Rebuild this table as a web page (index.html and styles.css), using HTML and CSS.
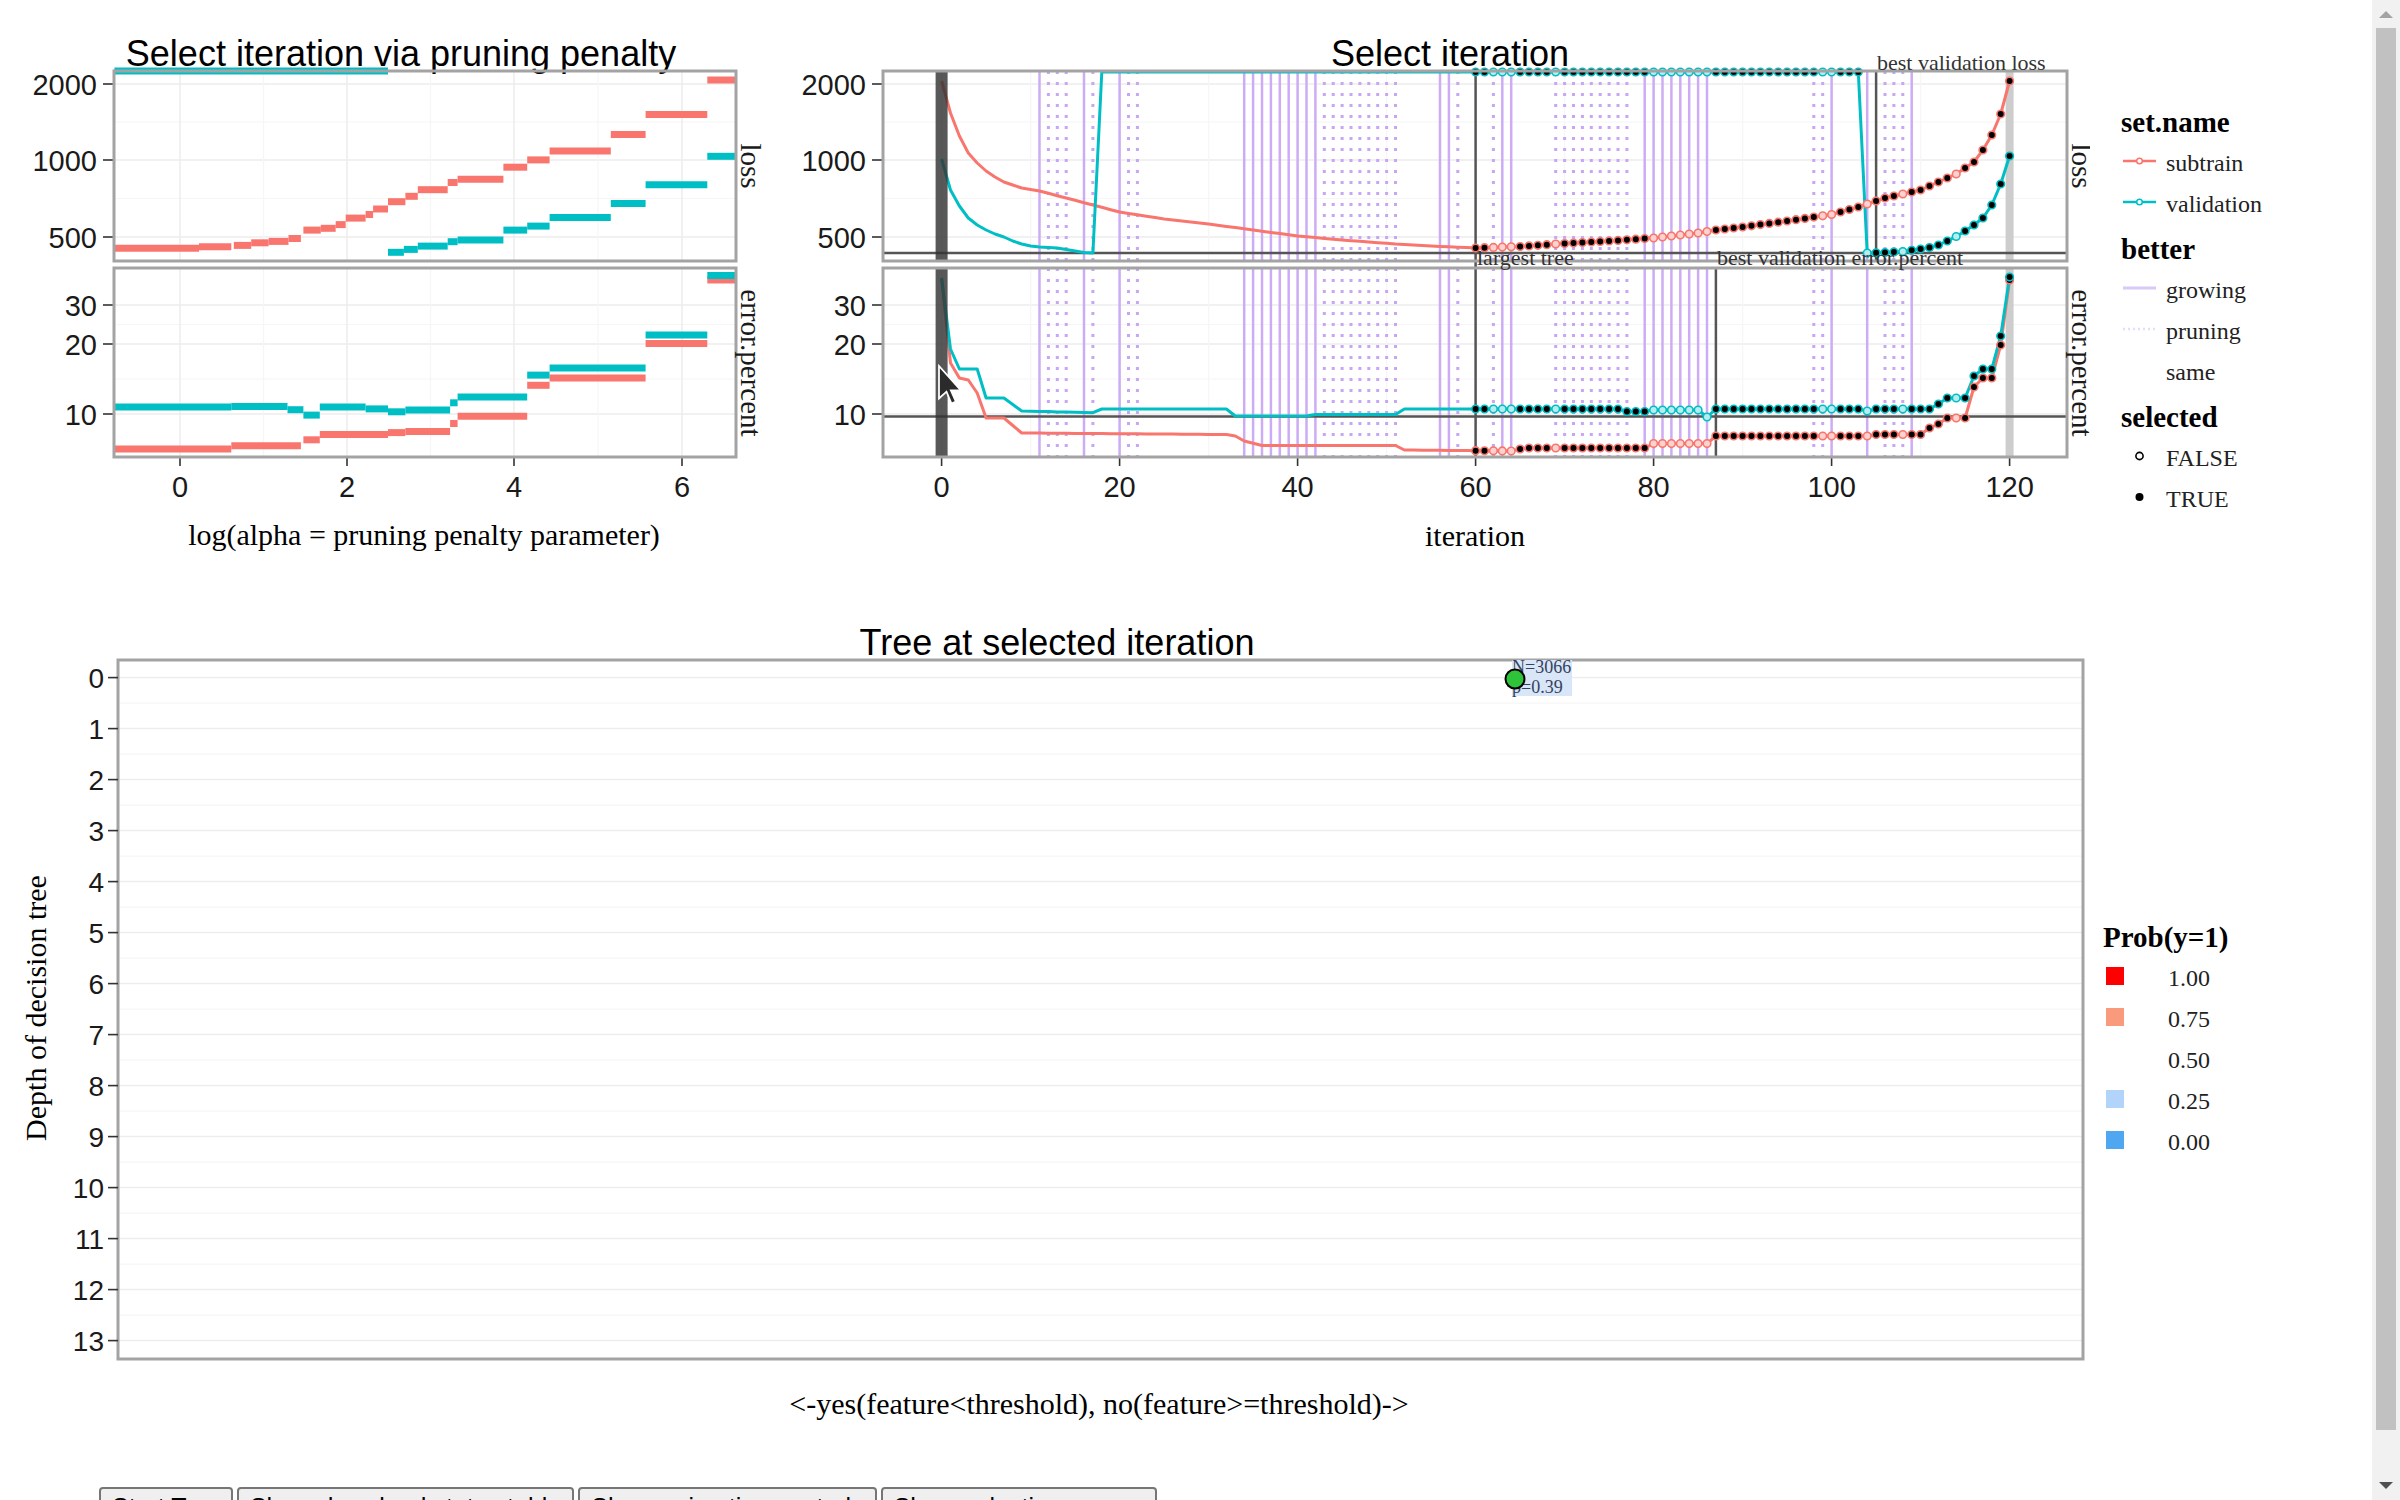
FILE: index.html
```html
<!DOCTYPE html>
<html>
<head>
<meta charset="utf-8">
<title>Select iteration</title>
<link rel="stylesheet" href="styles.css">
</head>
<body>
<div class="screen">
  <div class="page">
    <div class="top-row">
      <svg id="p1" class="plot p1" viewBox="0 0 780 580" xmlns="http://www.w3.org/2000/svg">
        <text class="ptitle" x="401" y="66">Select iteration via pruning penalty</text>
        <g id="p1-grid"></g>
        <g id="p1-data"></g>
        <g id="p1-axes"></g>
        <text class="axtitle" x="424" y="545">log(alpha = pruning penalty parameter)</text>
      </svg>
      <svg id="p2" class="plot p2" viewBox="780 0 1310 580" xmlns="http://www.w3.org/2000/svg">
        <text class="ptitle" x="1450" y="66">Select iteration</text>
        <g id="p2-grid"></g>
        <g id="p2-data"></g>
        <g id="p2-axes"></g>
        <text class="annot" x="1877" y="70">best validation loss</text>
        <text class="annot" x="1477" y="265">largest tree</text>
        <text class="annot" x="1717" y="265">best validation error.percent</text>
        <text class="axtitle" x="1475" y="546">iteration</text>
        <path class="cursor" transform="translate(939 366) scale(1.25)" d="M0 0 L0 26 L6 20.5 L10 30 L13.5 28.5 L9.5 19.5 L17.5 19.5 Z"/>
      </svg>
      <div class="legend">
        <div class="lg-title first">set.name</div>
        <div class="lg-item">
          <svg class="lg-icon" viewBox="0 0 43 41"><line class="li-red" x1="0" x2="33" y1="18" y2="18"/><circle class="lc-red" cx="16.5" cy="18" r="2.8"/></svg>
          <span>subtrain</span>
        </div>
        <div class="lg-item">
          <svg class="lg-icon" viewBox="0 0 43 41"><line class="li-teal" x1="0" x2="33" y1="18" y2="18"/><circle class="lc-teal" cx="16.5" cy="18" r="2.8"/></svg>
          <span>validation</span>
        </div>
        <div class="lg-title">better</div>
        <div class="lg-item">
          <svg class="lg-icon" viewBox="0 0 43 41"><line class="li-grow" x1="0" x2="33" y1="18" y2="18"/></svg>
          <span>growing</span>
        </div>
        <div class="lg-item">
          <svg class="lg-icon" viewBox="0 0 43 41"><line class="li-prune" x1="0" x2="33" y1="18" y2="18"/></svg>
          <span>pruning</span>
        </div>
        <div class="lg-item">
          <svg class="lg-icon" viewBox="0 0 43 41"></svg>
          <span>same</span>
        </div>
        <div class="lg-title">selected</div>
        <div class="lg-item">
          <svg class="lg-icon" viewBox="0 0 43 41"><circle class="lc-false" cx="16.5" cy="18" r="3.6"/></svg>
          <span>FALSE</span>
        </div>
        <div class="lg-item">
          <svg class="lg-icon" viewBox="0 0 43 41"><circle class="lc-true" cx="16.5" cy="18" r="4"/></svg>
          <span>TRUE</span>
        </div>
      </div>
    </div>

    <div class="tree-row">
      <svg id="tree" class="plot tree" viewBox="0 580 2090 900" xmlns="http://www.w3.org/2000/svg">
        <text class="ptitle" x="1057" y="655">Tree at selected iteration</text>
        <g id="tree-grid"></g>
        <rect class="panel" x="118" y="660" width="1965" height="699"/>
        <g id="tree-axes"></g>
        <text class="ylab" transform="translate(46 1008) rotate(-90)">Depth of decision tree</text>
        <rect class="node-bg" x="1512" y="660" width="60" height="36"/>
        <text class="node-text" x="1512" y="673">N=3066</text>
        <text class="node-text" x="1512" y="693">p=0.39</text>
        <circle class="node" cx="1515" cy="679" r="9.5"/>
        <text class="axtitle" x="1099" y="1414">&lt;-yes(feature&lt;threshold), no(feature&gt;=threshold)-&gt;</text>
      </svg>
      <div class="legend legend-prob">
        <div class="lg-title first">Prob(y=1)</div>
        <div class="lg-item"><span class="lg-swatch sw-100"></span><span class="lg-num">1.00</span></div>
        <div class="lg-item"><span class="lg-swatch sw-075"></span><span class="lg-num">0.75</span></div>
        <div class="lg-item"><span class="lg-swatch sw-050"></span><span class="lg-num">0.50</span></div>
        <div class="lg-item"><span class="lg-swatch sw-025"></span><span class="lg-num">0.25</span></div>
        <div class="lg-item"><span class="lg-swatch sw-000"></span><span class="lg-num">0.00</span></div>
      </div>
    </div>

    <div class="buttons">
      <button class="btn">Start Tour</button>
      <button class="btn">Show download status table</button>
      <button class="btn">Show animation controls</button>
      <button class="btn">Show selection menus</button>
    </div>
  </div>

  <div class="scrollbar">
    <div class="sb-arrow"><span class="tri-up"></span></div>
    <div class="sb-thumb"></div>
    <div class="sb-space"></div>
    <div class="sb-arrow bottom"><span class="tri-down"></span></div>
  </div>
</div>
<script src="script.js"></script>
</body>
</html>
```

FILE: styles.css
```css
html, body {
  margin: 0;
  padding: 0;
  background: #ffffff;
}
body {
  font-family: "Liberation Serif", "Times New Roman", serif;
  color: #000;
  overflow: hidden;
}
.screen {
  display: flex;
  width: 2400px;
  height: 1500px;
  overflow: hidden;
}
.page {
  flex: 1 1 auto;
  min-width: 0;
  display: flex;
  flex-direction: column;
  overflow: hidden;
}
.top-row {
  display: flex;
  height: 580px;
  flex: none;
}
.tree-row {
  display: flex;
  height: 900px;
  flex: none;
}
.plot {
  display: block;
  flex: none;
}
.p1 { width: 780px; height: 580px; }
.p2 { width: 1310px; height: 580px; }
.tree { width: 2090px; height: 900px; }

/* legends */
.legend {
  padding: 102px 0 0 31px;
  flex: 1 1 auto;
  min-width: 260px;
}
.lg-title {
  font-weight: bold;
  font-size: 29px;
  line-height: 41px;
  height: 41px;
  margin-top: 4px;
  color: #000;
  white-space: nowrap;
}
.lg-title.first { margin-top: 0; }
.lg-item {
  display: flex;
  align-items: center;
  height: 41px;
  font-size: 24px;
  line-height: 41px;
  color: #222;
  white-space: nowrap;
}
.lg-icon {
  width: 43px;
  height: 41px;
  margin-left: 2px;
  flex: none;
  display: block;
}
.li-red { stroke: #f8766d; stroke-width: 2.5; }
.li-teal { stroke: #00bfc4; stroke-width: 2.5; }
.lc-red { fill: #fff; stroke: #f8766d; stroke-width: 1.5; }
.lc-teal { fill: #fff; stroke: #00bfc4; stroke-width: 1.5; }
.li-grow { stroke: #dac8f7; stroke-width: 3; }
.li-prune { stroke: #e6dcfa; stroke-width: 2.5; stroke-dasharray: 2 3; }
.lc-false { fill: #fff; stroke: #000; stroke-width: 1.6; }
.lc-true { fill: #000; }

.legend-prob { padding: 337px 0 0 13px; }
.lg-swatch {
  width: 18px;
  height: 18px;
  margin: 0 44px 6px 3px;
  flex: none;
}
.sw-100 { background: #ff0000; }
.sw-075 { background: #f99a7c; }
.sw-050 { background: #ffffff; }
.sw-025 { background: #b3d4fa; }
.sw-000 { background: #4fa7f1; }
.lg-num { color: #222; }

/* buttons */
.buttons {
  display: flex;
  gap: 4px;
  padding-left: 99px;
  margin-top: 7px;
  flex: none;
}
.btn {
  font-family: "Liberation Sans", Arial, sans-serif;
  font-size: 25px;
  line-height: normal;
  padding: 4px 11px;
  border: 2px solid #767676;
  border-radius: 4px;
  background: #efefef;
  color: #000;
  flex: none;
}

/* scrollbar */
.scrollbar {
  width: 28px;
  flex: none;
  background: #f1f1f1;
  display: flex;
  flex-direction: column;
  align-items: center;
}
.sb-arrow {
  height: 28px;
  width: 28px;
  display: flex;
  align-items: center;
  justify-content: center;
  flex: none;
}
.sb-arrow.bottom { height: 30px; }
.tri-up {
  width: 0;
  height: 0;
  border-left: 7px solid transparent;
  border-right: 7px solid transparent;
  border-bottom: 7px solid #a3a3a3;
}
.tri-down {
  width: 0;
  height: 0;
  border-left: 7px solid transparent;
  border-right: 7px solid transparent;
  border-top: 7px solid #505050;
}
.sb-thumb {
  width: 20px;
  height: 1402px;
  background: #c1c1c1;
  flex: none;
}
.sb-space { flex: 1 1 auto; }

/* svg plot styling */
.ptitle {
  font-family: "Liberation Sans", Arial, sans-serif;
  font-size: 36px;
  text-anchor: middle;
  fill: #000;
}
.ytick, .xtick, .tick-tree {
  font-family: "Liberation Sans", Arial, sans-serif;
  font-size: 29px;
  fill: #1a1a1a;
}
.ytick { text-anchor: end; }
.xtick { text-anchor: middle; }
.tick-tree { text-anchor: end; font-size: 28px; }
.tickline { stroke: #333; stroke-width: 1.6; }
.axtitle {
  font-family: "Liberation Serif", "Times New Roman", serif;
  font-size: 30px;
  text-anchor: middle;
  fill: #000;
}
.ylab {
  font-family: "Liberation Serif", "Times New Roman", serif;
  font-size: 30px;
  text-anchor: middle;
  fill: #000;
}
.strip {
  font-family: "Liberation Serif", "Times New Roman", serif;
  font-size: 29px;
  text-anchor: middle;
  fill: #1a1a1a;
}
.annot {
  font-family: "Liberation Serif", "Times New Roman", serif;
  font-size: 22px;
  fill: #333;
}
.panel { fill: none; stroke: #a3a3a3; stroke-width: 3; }
.gmaj { stroke: #ededed; stroke-width: 1.5; }
.gmin { stroke: #f6f6f6; stroke-width: 1.2; }
.seg { stroke-width: 7; }
.red { stroke: #f8766d; }
.teal { stroke: #00bfc4; }
.curve { fill: none; stroke-width: 3; stroke-linejoin: round; }
.pt { stroke-width: 1.6; }
.pt.sel { fill: #000; }
.pt.unsel.red { fill: #fbd2cf; }
.pt.unsel.teal { fill: #b8ecee; }
.grow { stroke: #cdacf6; stroke-width: 2.5; }
.prune { stroke: #c7a6f4; stroke-width: 3; stroke-dasharray: 3 8; }
.band-dark { fill: #333; opacity: 0.82; }
.band-light { fill: #cdcdcd; }
.ref { stroke: #555; stroke-width: 2.5; }
.cursor { fill: #2b2b2b; stroke: #ffffff; stroke-width: 1.4; }
.node { fill: #2fc33a; stroke: #000; stroke-width: 2; }
.node-bg { fill: #d8e6f7; }
.node-text {
  font-family: "Liberation Serif", "Times New Roman", serif;
  font-size: 18px;
  fill: #34425e;
}
```

FILE: script.js
```js
(function () {
  var NS = 'http://www.w3.org/2000/svg';
  function add(parent, tag, attrs, text) {
    var e = document.createElementNS(NS, tag);
    for (var k in attrs) { e.setAttribute(k, attrs[k]); }
    if (text !== undefined) { e.textContent = text; }
    parent.appendChild(e);
    return e;
  }
  function byId(id) { return document.getElementById(id); }
  var PANELS = [[71, 261], [268, 457]];

  function buildGrid(g, x0, x1, vMajor, vMinor) {
    [122, 198.5, 324.5, 379].forEach(function (y) {
      add(g, 'line', { x1: x0, x2: x1, y1: y, y2: y, 'class': 'gmin' });
    });
    [84, 160, 237, 305, 344, 414].forEach(function (y) {
      add(g, 'line', { x1: x0, x2: x1, y1: y, y2: y, 'class': 'gmaj' });
    });
    PANELS.forEach(function (p) {
      vMinor.forEach(function (x) {
        add(g, 'line', { x1: x, x2: x, y1: p[0], y2: p[1], 'class': 'gmin' });
      });
      vMajor.forEach(function (x) {
        add(g, 'line', { x1: x, x2: x, y1: p[0], y2: p[1], 'class': 'gmaj' });
      });
    });
  }

  function buildAxes(g, x0, x1, xticks) {
    var yt = [[84, '2000'], [160, '1000'], [237, '500'], [305, '30'], [344, '20'], [414, '10']];
    yt.forEach(function (t) {
      add(g, 'line', { x1: x0 - 11, x2: x0, y1: t[0], y2: t[0], 'class': 'tickline' });
      add(g, 'text', { x: x0 - 17, y: t[0] + 10.5, 'class': 'ytick' }, t[1]);
    });
    xticks.forEach(function (t) {
      add(g, 'line', { x1: t[0], x2: t[0], y1: 457, y2: 466, 'class': 'tickline' });
      add(g, 'text', { x: t[0], y: 497, 'class': 'xtick' }, t[1]);
    });
    PANELS.forEach(function (p) {
      add(g, 'rect', { x: x0, y: p[0], width: x1 - x0, height: p[1] - p[0], 'class': 'panel' });
    });
    add(g, 'text', { 'class': 'strip', transform: 'translate(' + (x1 + 5) + ' 166) rotate(90)' }, 'loss');
    add(g, 'text', { 'class': 'strip', transform: 'translate(' + (x1 + 5) + ' 363) rotate(90)' }, 'error.percent');
  }

  /* ---------- plot 1 ---------- */
  var p1x = [180, 347, 514, 682];
  buildGrid(byId('p1-grid'), 114, 736, p1x, [263.5, 430.5, 598]);
  var p1 = byId('p1-data');
  function segs(list, cls) {
    list.forEach(function (s) {
      add(p1, 'line', { x1: s[0], x2: s[1], y1: s[2], y2: s[2], 'class': 'seg ' + cls });
    });
  }
  segs([[114.4,199,248.3],[199,231.3,246.8],[233.8,251.2,245.4],[251.2,268.6,242.8],[268.6,288.5,241.4],[288.5,300.9,238.5],[303.4,320.8,230.1],[320.8,335.7,228.3],[335.7,345.7,224.6],[345.7,365.6,218.1],[365.6,373.1,214.5],[373.1,388,209],[388,405.4,201.7],[405.4,417.8,196.3],[417.8,447.7,189.7],[447.7,457.6,182.5],[457.6,503.4,179.2],[503.4,527.2,167.2],[527.2,549.6,159.9],[549.6,610.8,150.9],[610.8,645.6,134.5],[645.6,707.3,114.5],[707.3,736,80]], 'red');
  segs([[114.4,388,71],[388,403.9,252.3],[403.9,417.8,249.4],[417.8,447.7,246.1],[447.7,457.6,241.7],[457.6,503.4,239.9],[503.4,527.2,230.1],[527.2,549.6,226.1],[549.6,610.8,217.4],[610.8,645.6,203.6],[645.6,707.3,184.7],[707.3,736,156.3]], 'teal');
  segs([[114.4,231.3,448.9],[231.3,300.9,445.7],[303.4,319.8,439.8],[319.8,388,434.4],[388,405.4,432.6],[405.4,450.1,431.5],[450.1,457.6,423.5],[457.6,527.2,416.2],[527.2,549.6,385.3],[549.6,645.6,378],[645.6,707.3,343.5],[707.3,736,280]], 'red');
  segs([[114.4,231.3,407.1],[231.3,287.5,406.4],[287.5,303.4,409.7],[303.4,319.8,415.1],[319.8,365.6,407.1],[365.6,388,408.9],[388,405.4,411.8],[405.4,450.1,410],[450.1,457.6,402.8],[457.6,527.2,397],[527.2,549.6,375.1],[549.6,645.6,367.9],[645.6,707.3,335.1],[707.3,736,275.5]], 'teal');
  buildAxes(byId('p1-axes'), 114, 736, [[180, '0'], [347, '2'], [514, '4'], [682, '6']]);

  /* ---------- plot 2 ---------- */
  function X(i) { return 941.6 + 8.9 * i; }
  var maj = [], mnr = [], xt = [];
  for (var k = 0; k <= 120; k += 20) { maj.push(X(k)); xt.push([X(k), String(k)]); }
  for (var m = 10; m <= 120; m += 20) { mnr.push(X(m)); }
  buildGrid(byId('p2-grid'), 883, 2067, maj, mnr);

  var p2 = byId('p2-data');
  var solid = [11,16,20,34,35,36,37,38,39,40,41,42,56,57,63,64,79,80,81,82,83,84,85,86,100,104,109];
  var dotted = [12,13,14,17,21,22,43,44,45,46,47,48,49,50,51,58,62,69,70,71,72,73,74,75,76,77,98,99,106,107,108];
  PANELS.forEach(function (p) {
    dotted.forEach(function (i) { add(p2, 'line', { x1: X(i), x2: X(i), y1: p[0], y2: p[1], 'class': 'prune' }); });
    solid.forEach(function (i) { add(p2, 'line', { x1: X(i), x2: X(i), y1: p[0], y2: p[1], 'class': 'grow' }); });
    add(p2, 'rect', { x: X(120) - 4, y: p[0], width: 8, height: p[1] - p[0], 'class': 'band-light' });
  });
  add(p2, 'line', { x1: 883, x2: 2067, y1: 253, y2: 253, 'class': 'ref' });
  add(p2, 'line', { x1: 883, x2: 2067, y1: 416.4, y2: 416.4, 'class': 'ref' });
  add(p2, 'line', { x1: X(60), x2: X(60), y1: 71, y2: 457, 'class': 'ref' });
  add(p2, 'line', { x1: X(105), x2: X(105), y1: 71, y2: 261, 'class': 'ref' });
  add(p2, 'line', { x1: X(87), x2: X(87), y1: 268, y2: 457, 'class': 'ref' });

  function interp(keys) {
    var out = [];
    for (var i = 0; i <= 120; i++) {
      var v = keys[keys.length - 1][1];
      for (var j = 0; j < keys.length - 1; j++) {
        var a = keys[j], b = keys[j + 1];
        if (i >= a[0] && i <= b[0]) {
          v = a[1] + (b[1] - a[1]) * (i - a[0]) / (b[0] - a[0]);
          break;
        }
      }
      out.push(v);
    }
    return out;
  }
  var RL = interp([[0,81],[1,113],[2,136],[3,153],[4,163],[5,171],[6,177],[7,182],[8,185],[9,188],[11,191],[14,198],[17,205],[20,212],[25,219],[30,224],[35,230],[40,236],[45,240],[51,244],[55,246],[60,248],[65,246.5],[70,243.5],[75,241],[80,238],[85,233],[87,230],[90,227],[95,221],[100,214.5],[103,207],[104,204],[105,201],[106,198],[107,196],[108,194],[110,190],[111,186],[112,182],[113,178],[114,174],[115,168],[116,162],[117,150],[118,135],[119,114],[120,81]]);
  var TL = interp([[0,159],[1,190],[2,206],[3,218],[4,225],[5,230],[6,234],[7,237],[8,241],[9,244],[10,246],[11,247],[13,248],[15,251],[16,252.5],[17,253],[18,72],[103,72],[104,253],[106,252.5],[108,251.5],[110,249],[111,247.5],[112,245],[113,241],[114,236.5],[115,231],[116,225],[117,218],[118,205],[119,184],[120,156]]);
  var TE = interp([[0,278],[1,349],[2,369],[4,369],[5,398],[7,398],[9,411],[17,412.7],[18,409],[32,409],[33,416],[41,416],[42,414.5],[51,414.5],[52,409],[76,409],[77,411.5],[79,411.5],[80,410],[85,410],[86,417],[87,409],[103,409],[104,411],[105,409],[111,409],[112,404],[113,398],[115,398],[116,376],[117,369],[118,369],[119,336],[120,277]]);
  var RE = interp([[0,278],[1,363],[2,378],[3,380],[4,393],[5,418],[7,418],[9,433],[32,434.5],[33,436],[34,441],[36,445.5],[51,445.5],[52,450],[64,451],[65,449],[66,448],[79,448],[80,443.6],[86,443.6],[87,436],[104,436],[105,434.5],[110,434.5],[111,428],[112,424],[113,418],[115,418],[116,387],[117,378],[118,378],[119,345],[120,280]]);

  var series = [[RL, 'red'], [TL, 'teal'], [RE, 'red'], [TE, 'teal']];
  series.forEach(function (s) {
    var pts = [];
    for (var i = 0; i <= 120; i++) { pts.push(X(i).toFixed(1) + ',' + s[0][i].toFixed(1)); }
    add(p2, 'polyline', { points: pts.join(' '), 'class': 'curve ' + s[1] });
  });
  PANELS.forEach(function (p) {
    add(p2, 'rect', { x: X(0) - 6, y: p[0], width: 12, height: p[1] - p[0], 'class': 'band-dark' });
  });
  var unsel = {62:1,63:1,64:1,69:1,80:1,81:1,82:1,83:1,84:1,85:1,86:1,99:1,100:1,104:1,108:1,114:1};
  series.forEach(function (s) {
    for (var i = 60; i <= 120; i++) {
      add(p2, 'circle', { cx: X(i).toFixed(1), cy: s[0][i].toFixed(1), r: 3.8,
        'class': 'pt ' + s[1] + (unsel[i] ? ' unsel' : ' sel') });
    }
  });
  buildAxes(byId('p2-axes'), 883, 2067, xt);

  /* ---------- tree ---------- */
  var tg = byId('tree-grid');
  var ta = byId('tree-axes');
  for (var d = 0; d <= 13; d++) {
    var y = 677.6 + 51 * d;
    add(tg, 'line', { x1: 118, x2: 2083, y1: y, y2: y, 'class': 'gmaj' });
    if (y + 25.5 < 1358) {
      add(tg, 'line', { x1: 118, x2: 2083, y1: y + 25.5, y2: y + 25.5, 'class': 'gmin' });
    }
    add(ta, 'line', { x1: 108, x2: 118, y1: y, y2: y, 'class': 'tickline' });
    add(ta, 'text', { x: 104, y: y + 10, 'class': 'tick-tree' }, String(d));
  }
})();
```
